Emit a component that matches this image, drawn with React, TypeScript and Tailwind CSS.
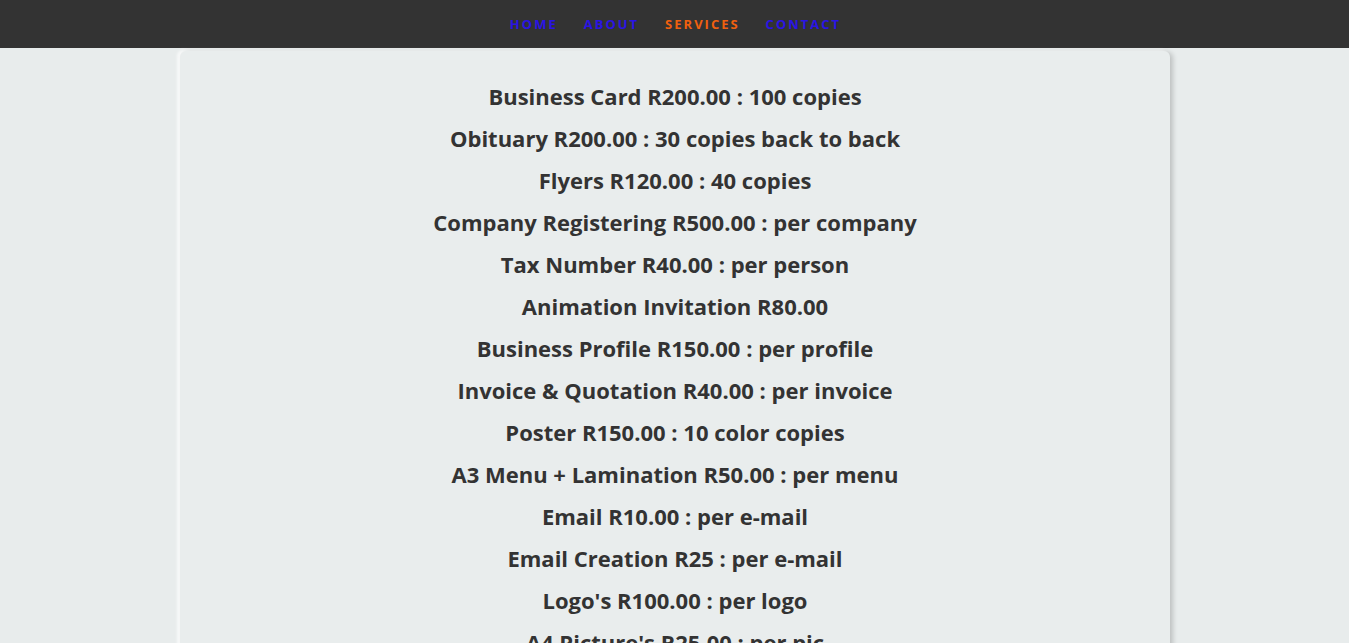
const links = [
  { label: "Home", active: false },
  { label: "About", active: false },
  { label: "Services", active: true },
  { label: "Contact", active: false },
];

const services = [
  "Business Card R200.00 : 100 copies",
  "Obituary R200.00 : 30 copies back to back",
  "Flyers R120.00 : 40 copies",
  "Company Registering R500.00 : per company",
  "Tax Number R40.00 : per person",
  "Animation Invitation R80.00",
  "Business Profile R150.00 : per profile",
  "Invoice & Quotation R40.00 : per invoice",
  "Poster R150.00 : 10 color copies",
  "A3 Menu + Lamination R50.00 : per menu",
  "Email R10.00 : per e-mail",
  "Email Creation R25 : per e-mail",
  "Logo's R100.00 : per logo",
  "A4 Picture's R25.00 : per pic",
  "Photocopy R2.00 : per page",
  "Printing R3.00 : per page",
];

export default function App() {
  return (
    <div className="min-h-screen bg-[#e8ecec]" style={{ fontFamily: '"Open Sans", "Liberation Sans", sans-serif' }}>
      <nav className="h-12 bg-[#333333] flex items-center justify-center pb-[2px]">
        <ul className="flex gap-[26px] pl-[2px]">
          {links.map((l) => (
            <li key={l.label}>
              <a
                href="#"
                className={
                  "uppercase font-bold text-[13px] tracking-[2px] " +
                  (l.active ? "text-[#f0600f]" : "text-[#2a14e4]")
                }
              >
                {l.label}
              </a>
            </li>
          ))}
        </ul>
      </nav>

      <main className="w-[990px] mx-auto mt-[3px] ml-[180px] rounded-md bg-[#e9eded] pt-[24px] pb-8 shadow-[3px_1px_5px_rgba(0,0,0,0.18),-3px_-1px_3px_rgba(255,255,255,0.7)]">
        {services.map((s) => (
          <h3 key={s} className="text-center font-bold text-[22px] leading-[42px] text-[#333333]">
            {s}
          </h3>
        ))}
      </main>
    </div>
  );
}
